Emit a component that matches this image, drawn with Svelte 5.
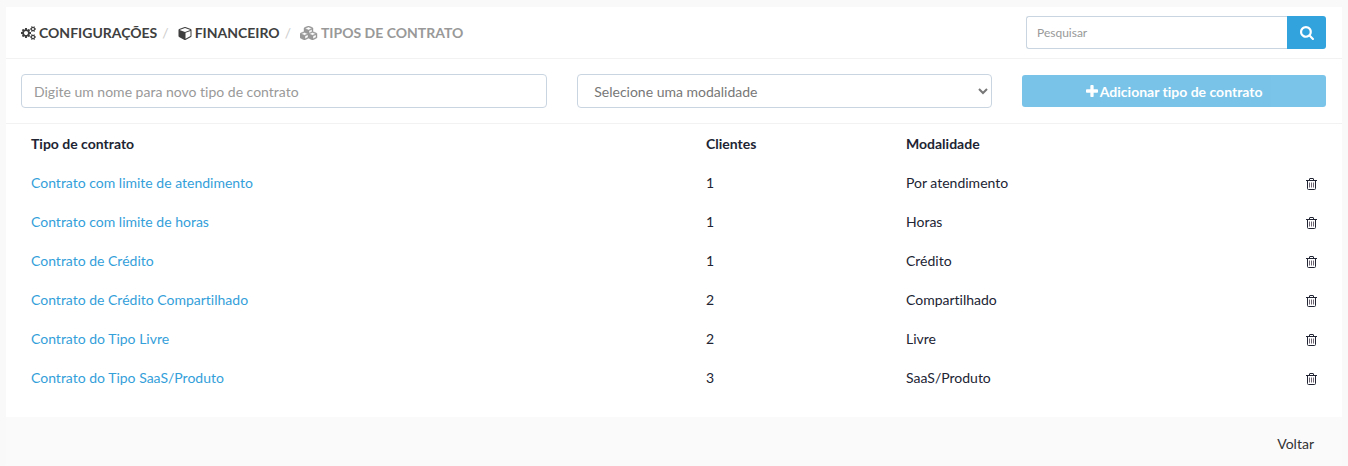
<script lang="ts">
  const modalities = ["Por atendimento", "Horas", "Crédito", "Compartilhado", "Livre", "SaaS/Produto"];

  let contracts = $state([
    { name: "Contrato com limite de atendimento", clients: 1, modality: "Por atendimento" },
    { name: "Contrato com limite de horas", clients: 1, modality: "Horas" },
    { name: "Contrato de Crédito", clients: 1, modality: "Crédito" },
    { name: "Contrato de Crédito Compartilhado", clients: 2, modality: "Compartilhado" },
    { name: "Contrato do Tipo Livre", clients: 2, modality: "Livre" },
    { name: "Contrato do Tipo SaaS/Produto", clients: 3, modality: "SaaS/Produto" },
  ]);

  let search = $state("");
  let newName = $state("");
  let newModality = $state("");

  let visible = $derived(
    contracts.filter((c) => c.name.toLowerCase().includes(search.toLowerCase()))
  );
  let incomplete = $derived(!newName || !newModality);

  function add(event: Event) {
    event.preventDefault();
    if (incomplete) return;
    contracts.push({ name: newName, clients: 0, modality: newModality });
    newName = "";
    newModality = "";
  }

  function remove(contract: any) {
    contracts = contracts.filter((c) => c !== contract);
  }
</script>

<main class="panel">
  <header class="heading">
    <nav aria-label="breadcrumb">
      <ol class="breadcrumb">
        <li>
          <a href="#configuracoes">
            <svg width="15" height="14" viewBox="0 0 1920 1792" aria-hidden="true">
              <path d="M896 896q0-106-75-181t-181-75-181 75-75 181 75 181 181 75 181-75 75-181zm768 512q0-52-38-90t-90-38-90 38-38 90q0 53 37.5 90.5t90.5 37.5 90.5-37.5 37.5-90.5zm0-1024q0-52-38-90t-90-38-90 38-38 90q0 53 37.5 90.5t90.5 37.5 90.5-37.5 37.5-90.5zm-384 421v185q0 10-7 19.5t-16 10.5l-155 24q-11 35-32 76 34 48 90 115 7 11 7 20 0 12-7 19-23 30-82.5 89.5t-78.5 59.5q-11 0-21-7l-115-90q-37 19-77 31-11 108-23 155-7 24-30 24h-186q-11 0-20-7.5t-10-17.5l-23-153q-34-10-75-31l-118 89q-7 7-20 7-11 0-21-8-144-133-144-160 0-9 7-19 10-14 41-53t47-61q-23-44-35-82l-152-24q-10-1-17-9.5t-7-19.5v-185q0-10 7-19.5t16-10.5l155-24q11-35 32-76-34-48-90-115-7-11-7-20 0-12 7-20 22-30 82-89t79-59q11 0 21 7l115 90q34-18 77-32 11-108 23-154 7-24 30-24h186q11 0 20 7.5t10 17.5l23 153q34 10 75 31l118-89q8-7 20-7 11 0 21 8 144 133 144 160 0 8-7 19-12 16-42 54t-45 60q23 48 34 82l152 23q10 2 17 10.5t7 19.5zm640 533v140q0 16-149 31-12 27-30 52 51 113 51 138 0 4-4 7-122 71-124 71-8 0-46-47t-52-68q-20 2-30 2t-30-2q-14 21-52 68t-46 47q-2 0-124-71-4-3-4-7 0-25 51-138-18-25-30-52-149-15-149-31v-140q0-16 149-31 13-29 30-52-51-113-51-138 0-4 4-7 4-2 35-20t59-34 30-16q8 0 46 46.5t52 67.5q20-2 30-2t30 2q51-71 92-112l6-2q4 0 124 70 4 3 4 7 0 25-51 138 17 23 30 52 149 15 149 31zm0-1024v140q0 16-149 31-12 27-30 52 51 113 51 138 0 4-4 7-122 71-124 71-8 0-46-47t-52-68q-20 2-30 2t-30-2q-14 21-52 68t-46 47q-2 0-124-71-4-3-4-7 0-25 51-138-18-25-30-52-149-15-149-31v-140q0-16 149-31 13-29 30-52-51-113-51-138 0-4 4-7 4-2 35-20t59-34 30-16q8 0 46 46.5t52 67.5q20-2 30-2t30 2q51-71 92-112l6-2q4 0 124 70 4 3 4 7 0 25-51 138 17 23 30 52 149 15 149 31z" />
            </svg>
            CONFIGURAÇÕES
          </a>
        </li>
        <li>
          <a href="#financeiro">
            <svg width="14" height="14" viewBox="-64 0 1792 1792" aria-hidden="true">
              <path d="M896 1629l640-349v-636l-640 233v752zm-64-865l698-254-698-254-698 254zm832-252v768q0 35-18 65t-49 47l-704 384q-28 16-61 16t-61-16l-704-384q-31-17-49-47t-18-65v-768q0-40 23-73t61-47l704-256q22-8 44-8t44 8l704 256q38 14 61 47t23 73z" />
            </svg>
            FINANCEIRO
          </a>
        </li>
        <li class="current" aria-current="page">
          <svg width="18" height="14" viewBox="0 0 2304 1792" aria-hidden="true">
            <path d="M640 1632l384-192v-314l-384 164v342zm-64-454l404-173-404-173-404 173zm1088 454l384-192v-314l-384 164v342zm-64-454l404-173-404-173-404 173zm-448-293l384-165v-266l-384 164v267zm-64-379l441-189-441-189-441 189zm1088 518v416q0 36-19 67t-52 47l-448 224q-25 14-57 14t-57-14l-448-224q-4-2-7-4-2 2-7 4l-448 224q-25 14-57 14t-57-14l-448-224q-33-16-52-47t-19-67v-416q0-38 21.5-70t56.5-48l434-186v-400q0-38 21.5-70t56.5-48l448-192q23-10 50-10t50 10l448 192q35 16 56.5 48t21.5 70v400l434 186q36 16 57 48t21 70z" />
          </svg>
          TIPOS DE CONTRATO
        </li>
      </ol>
    </nav>
    <form class="search" role="search" onsubmit={(e) => e.preventDefault()}>
      <input type="text" placeholder="Pesquisar" aria-label="Pesquisar" bind:value={search} />
      <button type="submit" aria-label="Pesquisar">
        <svg width="14" height="14" viewBox="64 128 1664 1664" aria-hidden="true">
          <path d="M1216 832q0-185-131.5-316.5t-316.5-131.5-316.5 131.5-131.5 316.5 131.5 316.5 316.5 131.5 316.5-131.5 131.5-316.5zm512 832q0 52-38 90t-90 38q-54 0-90-38l-343-342q-179 124-399 124-143 0-273.5-55.5t-225-150-150-225-55.5-273.5 55.5-273.5 150-225 225-150 273.5-55.5 273.5 55.5 225 150 150 225 55.5 273.5q0 220-124 399l343 343q37 37 37 90z" />
        </svg>
      </button>
    </form>
  </header>

  <form class="new-type" onsubmit={add}>
    <input
      class="control name"
      type="text"
      placeholder="Digite um nome para novo tipo de contrato"
      aria-label="Nome do tipo de contrato"
      bind:value={newName}
    />
    <select class="control modality" aria-label="Modalidade" bind:value={newModality}>
      <option value="">Selecione uma modalidade</option>
      {#each modalities as modality}
        <option value={modality}>{modality}</option>
      {/each}
    </select>
    <button class="add" type="submit" disabled={incomplete}>
      <svg width="12" height="12" viewBox="192 128 1408 1408" aria-hidden="true">
        <path d="M1600 736v192q0 40-28 68t-68 28h-416v416q0 40-28 68t-68 28h-192q-40 0-68-28t-28-68v-416h-416q-40 0-68-28t-28-68v-192q0-40 28-68t68-28h416v-416q0-40 28-68t68-28h192q40 0 68 28t28 68v416h416q40 0 68 28t28 68z" />
      </svg>
      Adicionar tipo de contrato
    </button>
  </form>

  <div class="list">
    <table>
      <thead>
        <tr>
          <th>Tipo de contrato</th>
          <th class="clients">Clientes</th>
          <th class="kind">Modalidade</th>
          <td class="actions"></td>
        </tr>
      </thead>
      <tbody>
        {#each visible as contract}
          <tr>
            <td><a href="#contrato">{contract.name}</a></td>
            <td>{contract.clients}</td>
            <td>{contract.modality}</td>
            <td class="actions">
              <button type="button" aria-label="Excluir {contract.name}" onclick={() => remove(contract)}>
                <svg width="11" height="12" viewBox="0 0 11 12" aria-hidden="true">
                  <path d="M0 2.5h11M3.5 2.5v-1.5q0-.5.5-.5h3q.5 0 .5.5v1.5M1.5 2.5v8q0 1 1 1h6q1 0 1-1v-8" />
                  <path class="bars" d="M3.5 4.5v5M5.5 4.5v5M7.5 4.5v5" />
                </svg>
              </button>
            </td>
          </tr>
        {/each}
      </tbody>
    </table>
  </div>

  <footer>
    <a href="#voltar">Voltar</a>
  </footer>
</main>

<style>
  :global(body) {
    margin: 0;
    background: #f9f9f9;
  }

  .panel {
    display: flex;
    flex-direction: column;
    box-sizing: border-box;
    min-height: 100vh;
    padding: 7px 6px 0;
    font-family: Lato, sans-serif;
    font-size: 14px;
    font-variant-ligatures: none;
    line-height: 20px;
    color: #212433;
  }

  input,
  select,
  button {
    box-sizing: border-box;
    margin: 0;
    font-family: inherit;
    font-size: 14px;
    font-variant-ligatures: none;
  }

  input::placeholder {
    color: #999;
    opacity: 1;
  }

  a {
    color: #34a0da;
    text-decoration: none;
  }

  svg {
    fill: currentColor;
  }

  .heading {
    display: flex;
    align-items: center;
    justify-content: space-between;
    box-sizing: border-box;
    height: 52px;
    padding: 0 16px 0 15px;
    background: #fff;
    border-bottom: 1px solid #f2f2f2;
  }

  .breadcrumb {
    display: flex;
    margin: 0;
    padding: 0;
    list-style: none;
    font-weight: bold;
  }

  .breadcrumb li {
    display: flex;
    align-items: center;
    gap: 3px;
    color: #403f3f;
  }

  .breadcrumb a {
    display: flex;
    align-items: center;
    gap: 3px;
    color: inherit;
  }

  .breadcrumb li + li::before {
    content: "/";
    padding: 0 6px 0 5px;
    font-weight: normal;
    color: #ccc;
  }

  .breadcrumb .current {
    color: #999;
  }

  .breadcrumb .current svg {
    stroke: currentColor;
    stroke-width: 50;
  }

  .search {
    display: flex;
    width: 300px;
  }

  .search input {
    flex: 1;
    min-width: 0;
    height: 33px;
    padding: 0 10px;
    border: 1px solid #c9d5e0;
    border-right: 0;
    border-radius: 3px 0 0 3px;
    font-size: 12px;
  }

  .search button {
    display: flex;
    align-items: center;
    justify-content: center;
    width: 39px;
    height: 33px;
    padding: 0;
    border: 0;
    border-radius: 0 3px 3px 0;
    background: #32a3dd;
    color: #fff;
  }

  .new-type {
    display: grid;
    grid-template-columns: repeat(12, minmax(0, 1fr));
    column-gap: 30px;
    align-items: center;
    padding: 15px 16px 15px 15px;
    background: #fff;
    border-bottom: 1px solid #f2f2f2;
  }

  .control {
    width: 100%;
    height: 34px;
    padding: 0 12px;
    border: 1px solid #c9d5e0;
    border-radius: 4px;
    background: #fff;
    color: #777;
  }

  .name {
    grid-column: span 5;
  }

  .modality {
    grid-column: span 4;
    padding: 0 0 0 12px;
  }

  .add {
    display: flex;
    grid-column: span 3;
    align-items: center;
    justify-content: center;
    gap: 2px;
    height: 32px;
    padding: 0;
    border: 0;
    border-radius: 3px;
    background: #32a3dd;
    font-weight: bold;
    color: #fff;
  }

  .add:disabled {
    opacity: 0.65;
  }

  .list {
    padding: 0 15px 20px;
    background: #fff;
  }

  table {
    width: 100%;
    border-collapse: collapse;
    table-layout: fixed;
  }

  th,
  td {
    height: 39px;
    padding: 0 10px;
    text-align: left;
  }

  .clients {
    width: 180px;
  }

  .kind {
    width: 330px;
  }

  .actions {
    width: 61px;
    text-align: right;
  }

  .actions button {
    display: inline-flex;
    padding: 0;
    border: 0;
    background: none;
    color: #212433;
    vertical-align: middle;
    cursor: pointer;
  }

  .actions svg {
    fill: none;
    stroke: currentColor;
  }

  .actions .bars {
    stroke: #6d6472;
  }

  footer {
    display: flex;
    flex: 1;
    justify-content: flex-end;
    padding: 17px 28px;
    background: #fafafa;
  }

  footer a {
    color: #333;
  }
</style>
